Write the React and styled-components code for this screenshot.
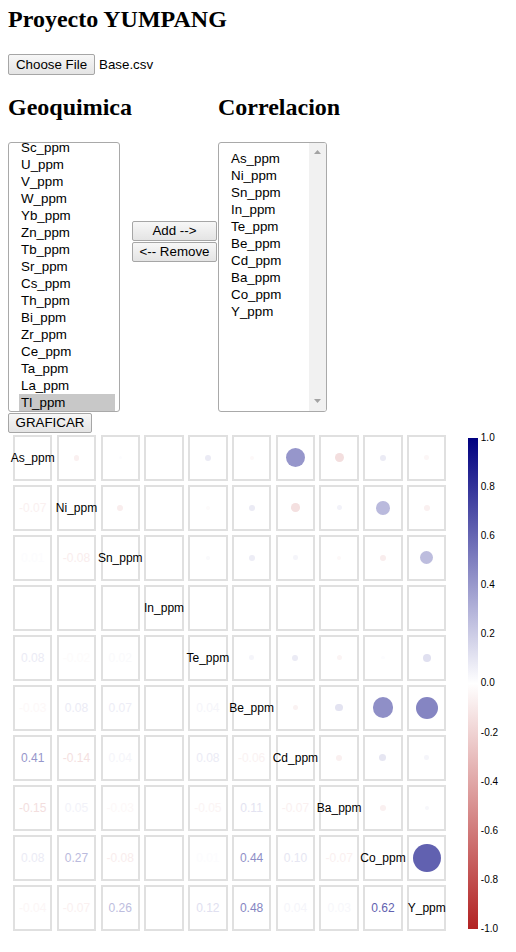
import React from 'react';
import styled, { createGlobalStyle } from 'styled-components';

const GlobalStyle = createGlobalStyle`
  body {
    margin: 0;
    background: #fff;
    color: #000;
    font-family: 'Liberation Serif', 'Times New Roman', serif;
  }
`;

const Page = styled.div`
  padding: 5px 8px 0;
`;

const Title = styled.h2`
  margin: 0;
  font-size: 24px;
  line-height: 28px;
  font-weight: bold;
`;

const FileRow = styled.div`
  display: flex;
  align-items: center;
  gap: 4px;
  margin-top: 21px;
  font-family: 'Liberation Sans', Arial, sans-serif;
  font-size: 13.333px;
`;

const Button = styled.button`
  box-sizing: border-box;
  width: ${(p) => p.$width}px;
  height: ${(p) => p.$height || 21}px;
  margin: 0;
  padding: 0;
  font-family: 'Liberation Sans', Arial, sans-serif;
  font-size: 13.333px;
  line-height: 1;
  color: #000;
  background: linear-gradient(#f7f7f7, #e4e4e4);
  border: 1px solid #a6a6a6;
  border-radius: 2px;
`;

const PlotButton = styled(Button)`
  display: block;
  margin-top: 1px;
`;

const Picker = styled.div`
  display: flex;
  align-items: flex-start;
  margin-top: 18px;
`;

const Column = styled.div`
  width: ${(p) => (p.$width ? `${p.$width}px` : 'auto')};
  margin-left: ${(p) => p.$offset || 0}px;
`;

const Heading = styled.h2`
  margin: 0 0 21px;
  font-size: 24px;
  line-height: 28px;
  font-weight: bold;
  white-space: nowrap;
`;

const Actions = styled.div`
  display: flex;
  flex-direction: column;
  gap: 1px;
  margin: 128px 0 0 12px;
`;

const ListBox = styled.div`
  box-sizing: border-box;
  display: flex;
  width: ${(p) => p.$width}px;
  height: 270px;
  border: 1px solid #a9a9a9;
  border-radius: 3px;
  overflow: hidden;
  font-family: 'Liberation Sans', Arial, sans-serif;
  font-size: 13.333px;
`;

const Options = styled.div`
  flex: 1;
  display: flex;
  flex-direction: column;
  justify-content: ${(p) => (p.$atEnd ? 'flex-end' : 'flex-start')};
  padding: ${(p) => (p.$atEnd ? '0 4px 0 10px' : '7px 0 0 10px')};
  overflow: hidden;
`;

const Option = styled.div`
  flex: none;
  height: 17px;
  line-height: 17px;
  padding: 0 2px;
  white-space: nowrap;
  background: ${(p) => (p.$selected ? '#c8c8c8' : 'transparent')};
`;

const ScrollTrack = styled.div`
  box-sizing: border-box;
  width: 17px;
  display: flex;
  flex-direction: column;
  align-items: center;
  justify-content: space-between;
  padding: 7px 0 8px;
  background: #f1f1f1;
`;

const Chart = styled.div`
  display: flex;
  align-items: flex-start;
  margin: 2px 0 0 5px;
`;

const Matrix = styled.div`
  display: grid;
  grid-template-columns: repeat(10, 39.4px);
  grid-auto-rows: 45.5px;
  column-gap: 4.4px;
  row-gap: 4.5px;
`;

const Cell = styled.div`
  box-sizing: border-box;
  display: flex;
  align-items: center;
  justify-content: center;
  border: 2px solid #e0e0e0;
  font-family: 'Liberation Sans', Arial, sans-serif;
  font-size: 12px;
  white-space: nowrap;
`;

const Dot = styled.span`
  flex: none;
  width: ${(p) => p.$size}px;
  height: ${(p) => p.$size}px;
  border-radius: 50%;
  background: ${(p) => p.$color};
`;

const Value = styled.span`
  color: ${(p) => p.$color};
`;

const Scale = styled.div`
  display: flex;
  margin: 3px 0 0 21.4px;
`;

const Bar = styled.div`
  width: 10px;
  height: 491px;
  background: linear-gradient(#000080 0%, #ffffff 50%, #b22222 100%);
`;

const Ticks = styled.div`
  display: flex;
  flex-direction: column;
  justify-content: space-between;
  height: 501px;
  margin: -5px 0 0 3px;
  font-family: 'Liberation Sans', Arial, sans-serif;
  font-size: 10px;
  line-height: 10px;
`;

// the list is scrolled to its end: only these rows are in view
const geochem = [
  'Sc_ppm', 'U_ppm', 'V_ppm', 'W_ppm', 'Yb_ppm', 'Zn_ppm', 'Tb_ppm', 'Sr_ppm',
  'Cs_ppm', 'Th_ppm', 'Bi_ppm', 'Zr_ppm', 'Ce_ppm', 'Ta_ppm', 'La_ppm', 'Tl_ppm',
];

const vars = ['As', 'Ni', 'Sn', 'In', 'Te', 'Be', 'Cd', 'Ba', 'Co', 'Y'].map((v) => `${v}_ppm`);

// lower triangle, row i holds r(i, j) for j < i
const lower = [
  [],
  [-0.07],
  [0.01, -0.08],
  [null, null, null],
  [0.08, -0.02, 0.02, null],
  [-0.03, 0.08, 0.07, null, 0.04],
  [0.41, -0.14, 0.04, null, 0.08, -0.06],
  [-0.15, 0.05, -0.03, null, -0.05, 0.11, -0.07],
  [0.08, 0.27, -0.08, null, 0.01, 0.44, 0.1, -0.07],
  [-0.04, -0.07, 0.26, null, 0.12, 0.48, 0.04, 0.03, 0.62],
];

const corr = (i, j) => (i > j ? lower[i][j] : lower[j][i]);

const mix = (a, b, t) => Math.round(a + (b - a) * t);
const corrColor = (v) => {
  const t = Math.min(Math.abs(v), 1);
  const end = v >= 0 ? [0, 0, 128] : [178, 34, 34];
  return `rgb(${mix(255, end[0], t)}, ${mix(255, end[1], t)}, ${mix(255, end[2], t)})`;
};

const ticks = ['1.0', '0.8', '0.6', '0.4', '0.2', '0.0', '-0.2', '-0.4', '-0.6', '-0.8', '-1.0'];

const Arrow = ({ down }) => (
  <svg width="7" height="4" viewBox="0 0 7 4">
    <polygon points={down ? '0,0 7,0 3.5,4' : '3.5,0 7,4 0,4'} fill="#a3a3a3" />
  </svg>
);

const MatrixCell = ({ i, j }) => {
  if (i === j) return <Cell>{vars[i]}</Cell>;
  const v = corr(i, j);
  if (v === null) return <Cell />;
  if (i > j) {
    return (
      <Cell>
        <Value $color={corrColor(v)}>{v.toFixed(2)}</Value>
      </Cell>
    );
  }
  const size = 2 * (1.5 + 20 * Math.abs(v));
  return (
    <Cell>
      <Dot $size={size.toFixed(1)} $color={corrColor(v)} />
    </Cell>
  );
};

const App = () => {
  return (
    <Page>
      <GlobalStyle />
      <Title>Proyecto YUMPANG</Title>
      <FileRow>
        <Button $width={87}>Choose File</Button>
        <span>Base.csv</span>
      </FileRow>

      <Picker>
        <Column $width={112}>
          <Heading>Geoquimica</Heading>
          <ListBox $width={112}>
            <Options $atEnd>
              {geochem.map((g) => (
                <Option key={g} $selected={g === 'Tl_ppm'}>
                  {g}
                </Option>
              ))}
            </Options>
          </ListBox>
        </Column>

        <Actions>
          <Button $width={85} $height={20}>Add --&gt;</Button>
          <Button $width={85} $height={20}>&lt;-- Remove</Button>
        </Actions>

        <Column $offset={1}>
          <Heading>Correlacion</Heading>
          <ListBox $width={109}>
            <Options>
              {vars.map((v) => (
                <Option key={v}>{v}</Option>
              ))}
            </Options>
            <ScrollTrack>
              <Arrow />
              <Arrow down />
            </ScrollTrack>
          </ListBox>
        </Column>
      </Picker>

      <PlotButton $width={84} $height={20}>
        GRAFICAR
      </PlotButton>

      <Chart>
        <Matrix>
          {vars.map((_, i) => vars.map((__, j) => <MatrixCell key={`${i}-${j}`} i={i} j={j} />))}
        </Matrix>
        <Scale>
          <Bar />
          <Ticks>
            {ticks.map((t) => (
              <span key={t}>{t}</span>
            ))}
          </Ticks>
        </Scale>
      </Chart>
    </Page>
  );
};

export default App;
